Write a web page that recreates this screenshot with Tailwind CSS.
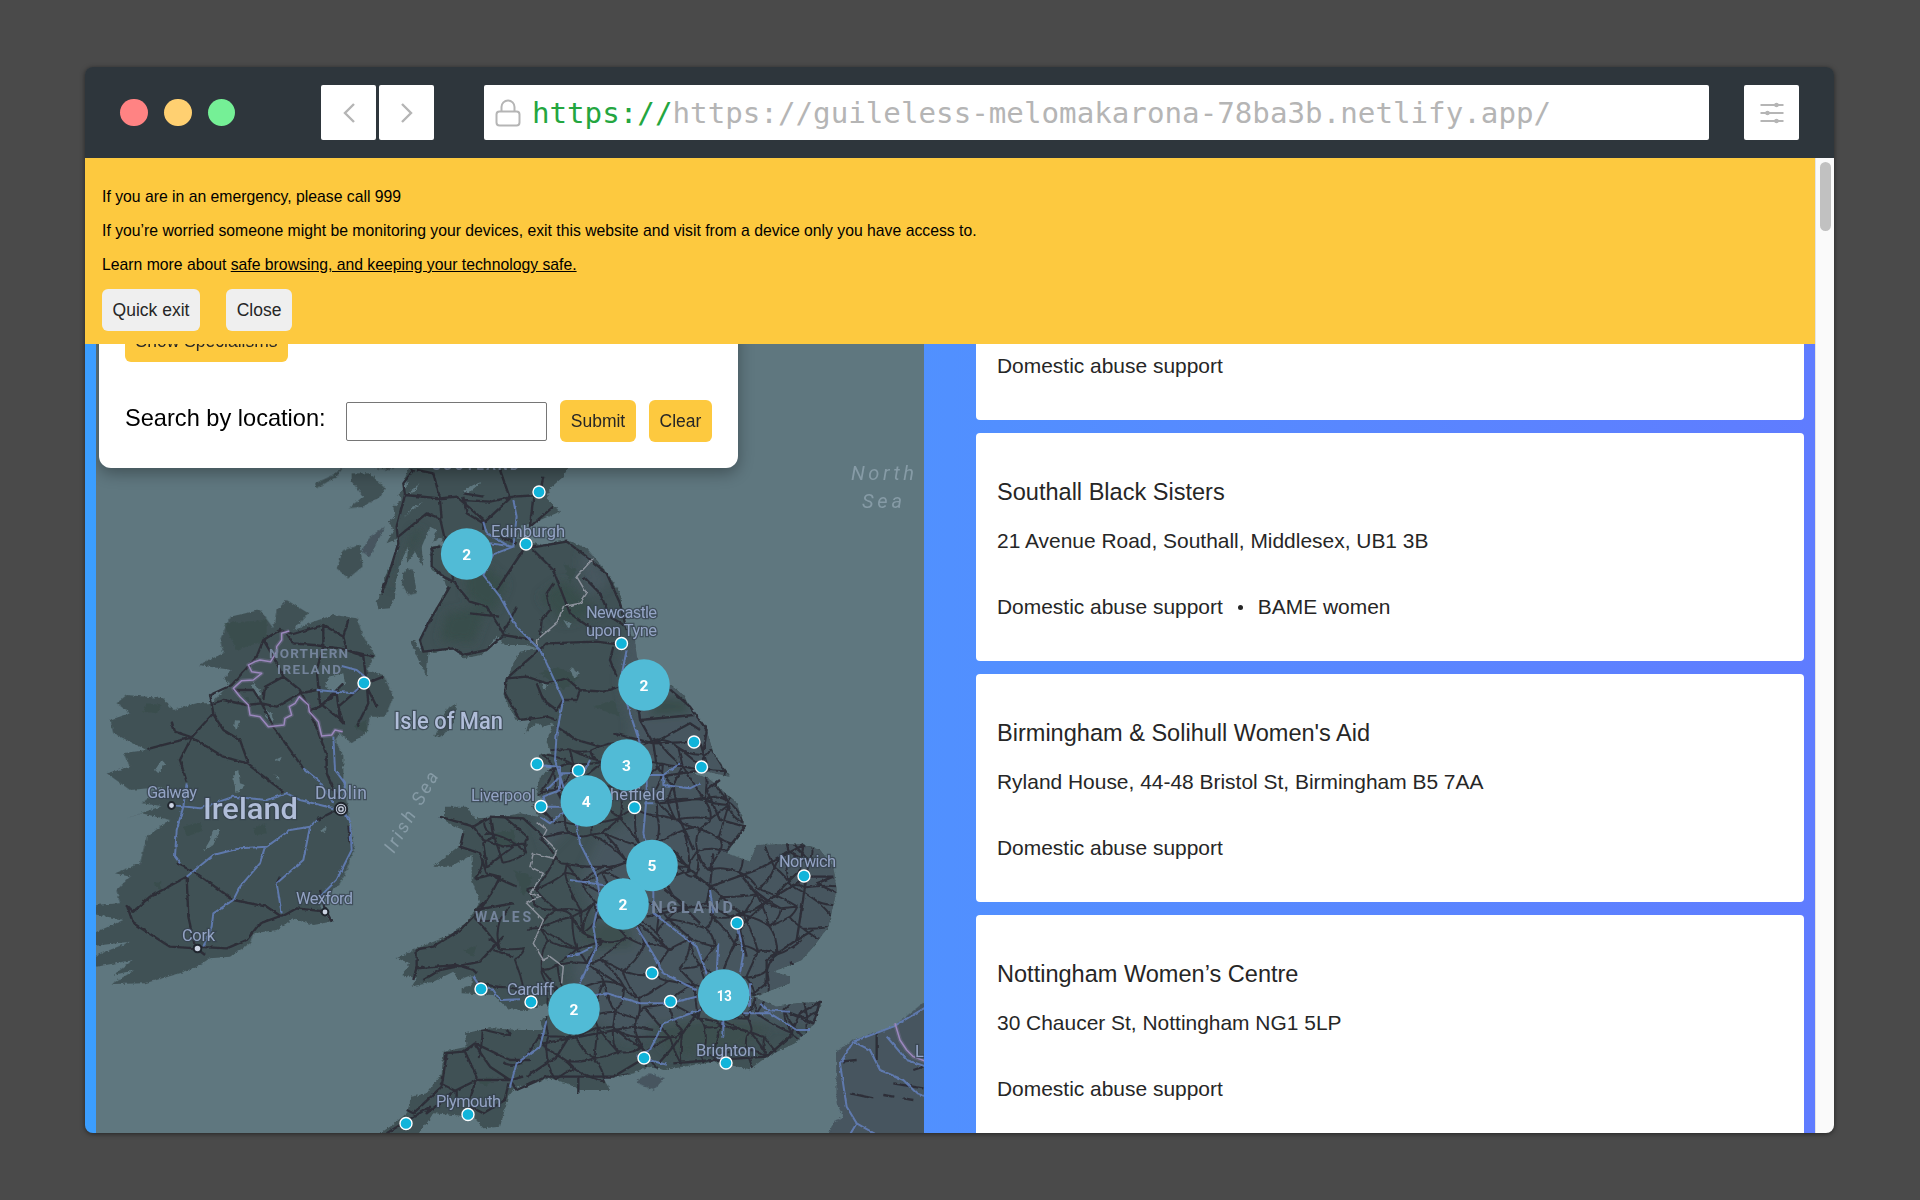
<!DOCTYPE html>
<html lang="en">
<head>
<meta charset="utf-8">
<title>Support services map</title>
<script src="https://cdn.jsdelivr.net/npm/@tailwindcss/browser@4"></script>
</head>
<body class="w-[1920px] h-[1200px] overflow-hidden bg-[#4a4a4a] pt-[67px] pl-[85px] font-['Liberation_Sans',Arial,sans-serif] text-[#262626]">
<div class="flex h-[1066px] w-[1749px] flex-col overflow-hidden rounded-lg shadow-[0_1px_5px_rgba(0,0,0,0.5)]">

  <!-- Browser toolbar -->
  <header class="flex h-[91px] shrink-0 items-center bg-[#2e363c] pl-[35px]">
    <div class="flex gap-4">
      <span class="size-[27.8px] rounded-full bg-[#ff8383]"></span>
      <span class="size-[27.8px] rounded-full bg-[#ffd071]"></span>
      <span class="size-[27.8px] rounded-full bg-[#75f096]"></span>
    </div>
    <div class="ml-[86px] flex gap-[3px]">
      <button class="flex h-[55px] w-[55px] items-center justify-center rounded-xs bg-white">
        <svg class="h-5 w-3" viewBox="0 0 12 20" fill="none" stroke="#b5b5b5" stroke-width="2.4"><path d="M11 1 2 10l9 9"/></svg>
      </button>
      <button class="flex h-[55px] w-[55px] items-center justify-center rounded-xs bg-white">
        <svg class="h-5 w-3" viewBox="0 0 12 20" fill="none" stroke="#b5b5b5" stroke-width="2.4"><path d="M1 1l9 9-9 9"/></svg>
      </button>
    </div>
    <div class="ml-[50px] flex h-[55px] w-[1225px] items-center rounded-xs bg-white pl-[11px] font-['DejaVu_Sans_Mono',monospace] text-[29.2px] whitespace-nowrap text-[#b5b5b5]">
      <svg class="mr-[10.5px] h-[28px] w-[26px] shrink-0" viewBox="0 0 26 28" fill="none" stroke="#b5b5b5" stroke-width="2"><rect x="1.500" y="12.500" width="23" height="14" rx="3"/><path d="M6.500 12.500V8a6.500 6.500 0 0 1 13 0v4.500"/></svg>
      <span class="pt-0.5 text-[#24a63f]">https://</span><span class="pt-0.5">https://guileless-melomakarona-78ba3b.netlify.app/</span>
    </div>
    <button class="ml-[35px] flex h-[55px] w-[55px] items-center justify-center rounded-xs bg-white">
      <svg class="h-[22px] w-6" viewBox="0 0 24 22" stroke="#b5b5b5" stroke-width="2" fill="#b5b5b5"><path d="M.5 3h23M.5 11h23M.5 19h23"/><g stroke="none"><circle cx="16.500" cy="3" r="2.300"/><circle cx="7.500" cy="11" r="2.300"/><circle cx="16.500" cy="19" r="2.300"/></g></svg>
    </button>
  </header>

  <div class="flex h-[975px]">
    <div class="flex w-[1730px] flex-col bg-linear-to-r from-[#3b9eff] via-[#5190ff] to-[#5f7cff]">

      <!-- Safety banner -->
      <section class="h-[186px] shrink-0 bg-[#fdc93f] pt-[30px] pl-[17px] text-[15.76px] leading-[18px] text-black">
        <p>If you are in an emergency, please call 999</p>
        <p class="mt-4">If you’re worried someone might be monitoring your devices, exit this website and visit from a device only you have access to.</p>
        <p class="mt-4">Learn more about <a class="underline">safe browsing, and keeping your technology safe.</a></p>
        <div class="mt-[15px] flex gap-[26px] text-[17.5px] text-[#262626]">
          <button class="h-[42px] w-[98px] rounded-md bg-[#efefef]">Quick exit</button>
          <button class="h-[42px] w-[66px] rounded-md bg-[#efefef]">Close</button>
        </div>
      </section>

      <div class="flex h-[789px] overflow-hidden pr-[11px] pl-[11px]">
        <!-- Map -->
        <div class="relative h-[789px] w-[828px] shrink-0 overflow-hidden bg-[#5f777f]">
          <svg class="absolute inset-0 block" width="828" height="789" viewBox="96 344 828 789" font-family="Roboto,'Open Sans',sans-serif">
            <defs>
              <filter id="coast" x="-5%" y="-5%" width="110%" height="110%"><feTurbulence type="fractalNoise" baseFrequency="0.11" numOctaves="4" seed="4"/><feDisplacementMap in="SourceGraphic" scale="11" xChannelSelector="R" yChannelSelector="G"/></filter>
              <filter id="wiggle" x="-5%" y="-5%" width="110%" height="110%"><feTurbulence type="fractalNoise" baseFrequency="0.06" numOctaves="2" seed="9"/><feDisplacementMap in="SourceGraphic" scale="9" xChannelSelector="R" yChannelSelector="G"/></filter>
              <filter id="soft"><feGaussianBlur stdDeviation="14"/></filter>
              <path id="gb" d="M1000 380 975 445 985 465 955 495 965 510 940 530 945 560 925 575 940 600 920 640 955 625 955 660 935 700 915 740 903 790 890 815 895 838 930 835 945 800 948 750 965 690 985 650 980 700 1005 665 1030 710 1025 650 1050 590 1070 600 1060 635 1085 620 1090 645 1050 650 1055 720 1090 740 1100 775 1080 820 1050 870 1020 920 1025 965 1000 930 993 940 1020 1000 1040 1040 1045 970 1125 955 1150 985 1205 975 1250 920 1275 945 1340 945 1370 955 1320 965 1300 1000 1285 1040 1270 1095 1310 1170 1350 1170 1335 1210 1370 1180 1390 1190 1420 1180 1400 1235 1415 1270 1375 1275 1385 1300 1420 1310 1380 1340 1370 1390 1395 1410 1355 1430 1380 1462 1320 1450 1260 1462 1185 1465 1160 1430 1095 1430 1095 1475 1150 1500 1140 1545 1060 1610 1110 1610 1175 1575 1175 1650 1200 1715 1160 1780 1100 1820 1010 1855 950 1885 990 1900 965 1935 1010 1945 995 1970 1060 1955 1120 1925 1135 1950 1175 1935 1175 1965 1145 1975 1145 1990 1240 1995 1285 2038 1340 2040 1400 2020 1412 2055 1380 2070 1390 2100 1320 2100 1230 2095 1155 2110 1160 2150 1090 2165 1085 2230 1040 2290 995 2300 980 2350 930 2390 870 2430 1000 2430 1040 2380 1060 2350 1180 2360 1210 2395 1260 2390 1285 2300 1305 2275 1410 2245 1460 2260 1500 2280 1590 2280 1570 2245 1660 2230 1700 2210 1755 2220 1810 2210 1900 2195 2010 2218 2060 2180 2145 2140 2200 2085 2225 2015 2150 2020 2090 2030 2020 2000 2130 1960 2130 1940 2080 1925 2165 1890 2200 1850 2245 1790 2270 1680 2260 1610 2220 1560 2160 1542 2030 1545 2010 1595 1940 1570 1995 1490 1970 1420 1885 1345 1820 1325 1870 1322 1950 1340 1900 1270 1880 1200 1840 1150 1810 1095 1770 1065 1700 1030 1670 980 1665 930 1635 890 1620 790 1590 740 1550 690 1520 655 1460 630 1380 645 1310 625 1320 590 1360 578 1440 545 1400 505 1410 475 1450 440 1490 360Z"/>
              <path id="eire" d="M620 0 685 40 640 90 700 65 760 45 830 55 850 110 885 165 860 210 910 225 940 290 915 350 870 350 860 395 815 430 780 400 765 420 790 470 790 550 800 600 810 680 822 745 800 810 780 850 735 890 720 920 755 965 700 975 640 955 590 990 520 1000 510 1030 450 1070 390 1075 350 1100 300 1120 195 1150 95 1152 165 1110 100 1125 160 1080 40 1102 40 1070 150 1025 45 1037 40 1000 130 960 40 942 45 915 120 910 110 870 150 830 105 820 180 790 200 710 270 660 185 640 140 655 245 618 185 610 250 560 150 570 80 520 150 500 130 460 200 450 100 400 90 360 150 340 110 310 140 285 250 295 280 330 350 310 395 310 450 250 430 235 455 210 355 195 430 160 420 120 450 50 540 30 580 85 590 30Z"/>
              <clipPath id="gbClip"><use href="#gb"/></clipPath>
            </defs>

            <g transform="translate(80 330) scale(.33333)">
              <g filter="url(#coast)" fill="#405155">
                <use href="#gb"/>
                <use href="#eire" y="810"/>
                <path d="M1130 1120 1120 1180 1085 1220 1062 1218 1090 1180 1095 1140Z"/>
                <path d="M980 715 1000 720 1010 790 985 795 965 760 970 730Z"/>
                <path d="M790 660 840 645 848 710 805 745 770 715Z"/><path d="M915 590 870 680 845 665 870 620Z" fill="#46555f"/>
                <path d="M815 430 870 430 915 475 900 500 850 530 805 535 850 500 815 455Z"/>
                <path d="M705 460 760 435 790 412 770 440 710 475Z"/><path d="M870 400 950 400 930 420 890 415Z"/>
                <path d="M1670 2250 1710 2230 1755 2245 1720 2280 1675 2260Z" fill="#46555f"/>
                <path d="M2540 2010 2440 2090 2320 2130 2268 2165 2270 2320 2290 2360 2260 2375 2240 2430 2540 2430Z" fill="#46555f"/>
              </g>
              <!-- Lowland tint and woodland -->
              <g clip-path="url(#gbClip)"><g filter="url(#soft)">
                <path d="M1640 900 1620 1050 1650 1180 1640 1300 1700 1420 1640 1480 1560 1520 1500 1640 1560 1800 1480 1900 1500 2050 1640 2130 1900 2060 2240 2100 2320 1500 1900 1100Z" fill="#47565f"/>
                <path d="M1400 1340 1500 1370 1480 1480 1400 1560 1360 1450ZM1500 680 1530 660 1590 760 1520 800Z" fill="#47565f"/>
                <path d="M1740 1100 1820 1110 1830 1150 1700 1160ZM1450 750 1560 850 1450 880 1380 800ZM1100 850 1220 830 1180 940 1080 930ZM1030 600 1000 600 960 740 930 780ZM1150 650 1280 760 1240 850 1160 800Z" fill="#394d4b"/>
                <path d="M1700 2090 1900 2060 2080 2080 1980 2160 1780 2180ZM1500 1800 1640 1760 1660 1850 1540 1860Z" fill="#3e504f"/>
              </g></g>
              <g fill="#394e4c" opacity=".75" filter="url(#coast)">
                <path d="M430 880 560 870 560 930 470 960ZM200 1120 245 1125 230 1150 190 1145ZM310 1490 360 1475 370 1500 320 1520ZM520 1495 555 1480 560 1510 525 1515ZM220 1660 245 1655 240 1680ZM1150 1860 1190 1845 1180 1880ZM470 1100 510 1105 500 1130ZM820 1190 860 1170 860 1210ZM1240 1510 1300 1500 1310 1540 1250 1550ZM1300 1620 1360 1640 1330 1700ZM1190 2250 1240 2240 1220 2270ZM1380 1030 1430 1010 1500 1040 1450 1080ZM1540 1130 1600 1110 1620 1160ZM1450 700 1490 720 1470 760Z"/>
              </g>
              <!-- Lakes -->
              <g fill="#5f777f" filter="url(#coast)">
                <path d="M745 1040 790 1030 795 1060 770 1085 735 1070ZM465 1325 475 1320 480 1360 495 1365 470 1390 460 1350ZM555 1140 575 1150 580 1180 560 1165ZM520 1055 545 1090 535 1100 515 1070ZM465 1170 478 1172 470 1200 462 1195ZM580 1330 600 1345 590 1345ZM585 1290 605 1280 600 1295ZM400 1500 420 1500 400 1545 370 1565 390 1530ZM720 1500 740 1490 735 1510ZM225 1320 245 1290 255 1300 235 1330ZM1020 455 1005 485 985 490 1010 470ZM1205 455 1165 490 1145 485 1180 465ZM1030 515 990 545 970 565 1000 530ZM1385 1060 1405 1062 1390 1080ZM1450 870 1475 880 1465 895ZM1470 1010 1500 1030 1480 1045Z"/>
              </g>

              <!-- Local roads -->
              <g fill="none" stroke="#2d2f38" stroke-width="7" stroke-linejoin="round" filter="url(#wiggle)">
                <g clip-path="url(#gbClip)"><path id="mesh" stroke-width="6"/></g>
                <path d="M275 1175 285 1205 335 1222 400 1150 390 1095 455 1065 530 980 550 930 600 900 640 912 730 885 790 920 805 870M335 1222 250 1245 205 1257M335 1222 430 1280 500 1300 610 1385M335 1222 300 1290 320 1355M398 1150 430 1200 480 1230 505 1300M400 1120 430 1110 500 1125 545 1120 520 1080 460 1080M545 1120 590 1130 660 1090 710 1080M545 1120 580 1190 670 1315M550 1110 555 1070 610 1040 580 980 550 930M610 1040 660 1080 690 1140 720 1130 790 1060M620 910 640 940 700 945 780 955 880 980M730 885 730 950 710 1020 720 1120 770 1160 790 1180 775 1130 855 1060 890 1130M790 920 800 960 850 980 860 1060 865 1120 830 1190M720 1130 770 1090 780 1170M690 1140 740 1275 740 1330 770 1400M860 1060 910 1040M710 1470 770 1440M805 1490 812 1540M290 1600 350 1630 460 1710 560 1730 605 1760 650 1735 740 1745 755 1775M320 1640 325 1760 345 1850 440 1855 500 1830 540 1780 610 1755M320 1640 210 1700 160 1745 140 1725 160 1780 270 1850 350 1855 375 1875M600 1640 590 1660M720 1680 735 1740"/>
                <path d="M1000 420 970 460 975 495 1080 505 1060 430 1010 420M975 495 950 590 955 640 930 720 905 790M955 620 1040 550 1080 565 1095 630 1110 700 1120 750M1080 510 1085 565M1080 505 1130 500 1210 570 1210 600M1150 500 1160 550 1210 580 1290 505 1260 420M1150 510 1230 515 1300 500 1380 495 1390 440M1210 500 1150 490M1080 650 1055 655 1055 710 1090 740 1120 755 1170 815 1220 830 1270 910 1310 830M1110 770 1050 870 1020 930 1030 965 1120 955 1150 975 1220 960 1270 915 1360 930M1340 645 1250 780M1360 500 1350 590 1420 530M1310 640 1260 620M1340 655 1460 635 1520 680 1580 730 1620 820 1640 900M1360 660 1420 720 1435 760 1470 850 1540 900M1420 760 1400 790 1410 840 1385 870 1380 920M1510 740 1560 790 1590 860 1640 890M1170 850 1260 860"/>
                <path d="M1280 1045 1400 940 1550 935 1630 945M1280 1045 1340 1040 1400 1060 1460 1045 1500 1080 1570 1085 1650 1060M1280 1045 1275 1090 1320 1170 1400 1160 1430 1170M1370 1060 1390 1110 1430 1140 1450 1110 1490 1110 1500 1080M1600 950 1590 990 1610 1040M1660 1000 1680 1170 1720 1240 1830 1180 1860 1200M1640 1060 1760 1070 1830 1130 1880 1200 1870 1270M1680 1170 1840 1155M1720 1240 1860 1235 1880 1300M1430 1190 1490 1230 1560 1250M1720 1240 1600 1210M1720 1240 1730 1310 1780 1370 1800 1470 1840 1560M1920 1350 1880 1380 1920 1470 1995 1490 1940 1560M1740 1340 1870 1320M1740 1420 1910 1400"/>
                <path d="M1080 1460 1180 1490 1230 1460 1330 1465 1400 1530M1150 1510 1140 1550 1200 1570 1220 1630M1180 1490 1210 1530 1270 1550 1340 1540M1230 1460 1240 1520 1210 1540 1220 1610 1300 1550M1220 1630 1260 1640 1240 1680 1200 1740 1140 1800 1060 1850 1010 1858 1010 1910 1000 1950M1220 1630 1310 1670M1185 1740 1300 1720M1010 1915 1130 1905 1180 1920 1190 1930M1030 1950 1080 1920 1200 1895 1270 1820M1240 1860 1300 1880"/>
                <path d="M920 2410 1050 2330 1040 2350 1130 2280 1190 2250 1290 2250 1330 2240M1090 2170 1150 2165 1185 2140 1290 2190 1350 2190M1185 2145 1230 2210 1290 2250M1155 2165 1190 2240 1170 2310M1100 2170 1085 2270 1000 2350 980 2340M1080 2260 1130 2285 1130 2330M1285 2260 1275 2310 1210 2350 1170 2330M1290 2250 1310 2280 1400 2240 1500 2240 1600 2240 1700 2180M1495 2240 1495 2295M1390 2140 1500 2120 1660 2090 1720 2100M1480 2100 1430 2180 1340 2240M1780 2200 1900 2190 2060 2180 2130 2120 2160 2050 2220 2015 2200 2080 2130 2050M1740 2195 1780 2150 1850 2050M1720 1590 1780 1700 1860 1780"/>
                <path d="M1780 1560 1830 1620 1890 1670 1880 1720 1950 1760 2020 1740 2180 1640 2260 1640M1900 1570 1890 1670 2030 1620 2170 1545M2170 1545 2160 1620 2080 1700 1990 1780 1950 1870M1880 1720 1790 1740 1700 1760M2260 1640 2210 1660 2270 1690M2180 1640 2150 1830 2060 1890 2060 1960 2020 1990M2150 1830 2200 1800M1970 1760 2000 1880"/>
                <path d="M2280 2195 2330 2190M2310 2290 2380 2305M2410 2295 2440 2300M2390 2110 2390 2190M2440 2260 2530 2275M2500 2220 2530 2210M2470 2305 2500 2310"/>
              </g>
              <!-- Wales and Scotland borders -->
              <g fill="none" stroke="#8b919b" stroke-width="4.500" filter="url(#wiggle)"><path d="M1540 685 1490 740 1520 790 1500 820 1450 830 1430 880 1370 930 1370 950M1370 1475 1400 1500 1390 1520 1430 1560 1420 1585 1360 1570 1350 1610 1390 1630 1350 1690 1380 1700 1340 1720 1390 1770 1360 1840 1390 1890 1410 1880 1450 1910 1445 1960"/></g>
              <!-- Motorways -->
              <g fill="none" stroke="#637fb9" stroke-width="6" stroke-linejoin="round" opacity=".88" filter="url(#wiggle)">
                <path d="M1300 510 1310 560 1300 650 1240 673 1210 735 1260 800 1310 890 1380 960 1400 1000 1450 1110 1430 1210 1425 1290 1450 1370 1480 1440 1500 1540 1550 1640 1560 1700 1540 1790 1550 1850 1500 1960M1210 575 1220 610 1290 650M1230 640 1300 650M1450 1330 1400 1380M1370 1305 1440 1310 1440 1380 1390 1400 1400 1430 1500 1430M1380 1460 1410 1480 1460 1440M1440 1330 1510 1330 1530 1290M1640 960 1620 1060 1660 1180 1700 1300 1700 1400 1690 1510 1720 1620 1720 1750M1710 1335 1750 1335 1800 1300M1750 1335 1750 1365 1830 1375 1860 1360M1720 1420 1690 1420M1470 1650 1600 1670M1670 1790 1730 1890 1750 1930 1850 1980M1720 1750 1850 1850 1880 1930M1890 1680 1900 1750M1915 1840 1910 1930M1970 1770 1990 1870 1980 1930M1460 2010 1580 1990 1680 2020 1770 2020 1850 2000M1460 1880 1500 1870 1540 1850M1400 2070 1380 2150 1310 2200 1290 2270M1180 1940 1200 1970 1240 1980 1260 2010 1320 2008M1860 2040 1750 2080 1710 2160 1670 2180M1710 2190 1760 2205M1930 2070 1930 2120M1990 2050 2070 2050 2150 2100 2190 2100M2040 2020 2060 2040 2130 2045M2010 1960 2010 2030"/>
                <path d="M320 1360 310 1430 290 1500 285 1580 300 1600M275 1425 360 1435 460 1400 560 1410 620 1390 660 1410 760 1435M670 1315 720 1355 760 1420M760 1220 765 1320 795 1360 790 1410M710 1470 690 1490 630 1500 560 1550 480 1555 400 1575 320 1640M555 1550 540 1600 480 1670 460 1710 400 1750 395 1790 370 1850M690 1490 670 1590 590 1660 605 1750M785 1430 810 1480 815 1560 770 1650 720 1700M710 1080 820 1090 850 1060M785 1008 830 1020 860 1045"/>
                <path d="M2540 2030 2440 2090 2320 2135 2280 2200 2300 2330 2330 2380 2300 2430M2320 2135 2370 2160 2400 2220 2470 2250 2510 2290 2540 2300M2420 2120 2480 2190 2540 2210M2330 2380 2400 2420"/>
              </g>
              <!-- Irish and French borders -->
              <g fill="none" stroke-linejoin="round" stroke="#9b87bd">
                <path stroke-width="4.500" d="M628 903 605 910 605 930 590 950 590 965 572 995 540 990 525 995 505 1005 515 1025 545 1030 520 1050 485 1052 460 1075 480 1100 505 1125 510 1155 540 1160 565 1190 612 1185 615 1165 635 1155 628 1130 645 1120 658 1100 685 1125 688 1145 715 1175 725 1218 755 1215 765 1200 788 1205M2445 2080 2460 2130 2480 2160 2500 2180 2540 2195"/>
                <path stroke-width="13" opacity=".22" d="M628 903 605 910 605 930 590 950 590 965 572 995 540 990 525 995 505 1005 515 1025 545 1030 520 1050 485 1052 460 1075 480 1100 505 1125 510 1155 540 1160 565 1190 612 1185 615 1165 635 1155 628 1130 645 1120 658 1100 685 1125 688 1145 715 1175 725 1218 755 1215 765 1200 788 1205M2445 2080 2460 2130 2480 2160 2500 2180 2540 2195"/>
              </g>
            </g>

            <!-- Place names -->
            <g fill="#93a3c4" stroke="#36424f" stroke-width="2.500" stroke-opacity=".75" paint-order="stroke" font-size="16.500" lengthAdjust="spacingAndGlyphs">
              <text x="491" y="536.500" textLength="74">Edinburgh</text>
              <text x="586" y="618" textLength="71">Newcastle</text>
              <text x="586" y="636" textLength="71">upon Tyne</text>
              <text x="147" y="798" textLength="50">Galway</text>
              <text x="315" y="799" textLength="52" font-size="17.500">Dublin</text>
              <text x="471" y="801" textLength="64">Liverpool</text>
              <text x="600" y="799.500" textLength="65">Sheffield</text>
              <text x="779" y="867" textLength="57">Norwich</text>
              <text x="182" y="941" textLength="33">Cork</text>
              <text x="296" y="904" textLength="57">Wexford</text>
              <text x="507" y="995" textLength="47">Cardiff</text>
              <text x="696" y="1056" textLength="60">Brighton</text>
              <text x="436" y="1106.500" textLength="65">Plymouth</text>
              <text x="915" y="1057">L</text>
              <g fill="#b0bdd9" font-weight="500">
                <text x="394" y="729" textLength="109" lengthAdjust="spacingAndGlyphs" font-size="23.500">Isle of Man</text>
                <text x="203" y="818.500" textLength="95" lengthAdjust="spacingAndGlyphs" font-size="29.500">Ireland</text>
              </g>
              <g fill="#74849b" stroke="none" font-weight="700" font-size="13.500">
                <text x="269" y="658" textLength="79">NORTHERN</text>
                <text x="277" y="674" textLength="64">IRELAND</text>
                <text x="475" y="922" textLength="56" font-size="14">WALES</text>
                <text x="639" y="912.500" textLength="94" font-size="16">ENGLAND</text>
                <text x="432" y="469.500" textLength="87" font-size="14">SCOTLAND</text>
              </g>
              <g fill="#869ba6" stroke="none" font-style="italic" font-size="20">
                <text x="851" y="480" textLength="63">North</text>
                <text x="862" y="508" textLength="40">Sea</text>
                <text transform="translate(394 854) rotate(-60)" textLength="90" font-size="18.500">Irish Sea</text>
              </g>
            </g>
            <g fill="#cdd4e4" stroke="#20262e" stroke-width="2">
              <circle cx="171.500" cy="805.500" r="3.400"/><circle cx="325" cy="912" r="3.400"/><circle cx="197.500" cy="948.500" r="3.800"/>
              <circle cx="341" cy="809" r="6.200"/><circle cx="341" cy="809" r="3.600" stroke="#2e3540" stroke-width="1.500"/><circle cx="341" cy="809" r="1.500" stroke="none" fill="#2e3540"/>
            </g>

            <!-- Single locations -->
            <g id="dots" fill="#11b4da" stroke="#fff" stroke-width="1.400"></g>
            <!-- Clusters -->
            <g fill="#51bbd6">
              <circle cx="466.700" cy="554" r="25.800"/><circle cx="644" cy="685" r="25.800"/><circle cx="626.500" cy="765" r="25.800"/><circle cx="586.300" cy="801" r="25.800"/><circle cx="652" cy="865.500" r="25.800"/><circle cx="623" cy="904" r="25.800"/><circle cx="574" cy="1009" r="25.800"/><circle cx="723.700" cy="995" r="25.800"/>
            </g>
            <g fill="#fff" font-size="15.500" font-weight="700" text-anchor="middle">
              <text x="466.700" y="559.500">2</text><text x="644" y="690.500">2</text><text x="626.500" y="770.500">3</text><text x="586.300" y="806.500">4</text><text x="652" y="871">5</text><text x="623" y="909.500">2</text><text x="574" y="1014.500">2</text><text x="724.300" y="1000.500" textLength="15" lengthAdjust="spacingAndGlyphs">13</text>
            </g>
          </svg>

          <!-- Filter panel -->
          <div class="absolute -top-6 left-[3px] h-[148px] w-[639px] rounded-xl bg-white px-[26px] shadow-[0_5px_16px_rgba(0,0,0,0.32)]">
            <button class="block h-[42px] w-[163px] rounded-md bg-[#fdc93f] text-[17.5px] text-[#262626]">Show Specialisms</button>
            <div class="mt-[38px] flex items-center text-[17.5px]">
              <label class="w-[221px] pb-1 text-[23.6px] text-black">Search by location:</label>
              <input class="h-[39px] w-[201px] rounded-xs border border-[#767676] bg-white">
              <button class="ml-[13px] h-[42px] w-[76px] rounded-md bg-[#fdc93f]">Submit</button>
              <button class="ml-[13px] h-[42px] w-[63px] rounded-md bg-[#fdc93f]">Clear</button>
            </div>
          </div>
        </div>

        <!-- Results -->
        <div class="ml-[52px] flex flex-1 flex-col gap-[13px] text-[20.95px] leading-6">
          <article class="h-[76px] shrink-0 rounded-b bg-white pt-[10px] pl-[21px]"><p>Domestic abuse support</p></article>
          <article class="h-[228px] shrink-0 rounded bg-white pt-[45px] pl-[21px]">
            <h2 class="text-[23.56px] leading-7">Southall Black Sisters</h2>
            <p class="mt-[23px]">21 Avenue Road, Southall, Middlesex, UB1 3B</p>
            <p class="mt-[42px] flex items-center"><span>Domestic abuse support</span><span class="mr-[15px] ml-[15px] size-[5px] rounded-full bg-[#262626]"></span><span>BAME women</span></p>
          </article>
          <article class="h-[228px] shrink-0 rounded bg-white pt-[45px] pl-[21px]">
            <h2 class="text-[23.56px] leading-7">Birmingham &amp; Solihull Women's Aid</h2>
            <p class="mt-[23px]">Ryland House, 44-48 Bristol St, Birmingham B5 7AA</p>
            <p class="mt-[42px]">Domestic abuse support</p>
          </article>
          <article class="h-[228px] shrink-0 rounded bg-white pt-[45px] pl-[21px]">
            <h2 class="text-[23.56px] leading-7">Nottingham Women’s Centre</h2>
            <p class="mt-[23px]">30 Chaucer St, Nottingham NG1 5LP</p>
            <p class="mt-[42px]">Domestic abuse support</p>
          </article>
        </div>
      </div>
    </div>

    <!-- Scrollbar -->
    <div class="flex w-[19px] justify-center border-l border-[#e4e4e4] bg-[#fafafa] pt-1">
      <div class="h-[69px] w-[11px] rounded-full bg-[#c1c1c1]"></div>
    </div>
  </div>
</div>

<script>
  // Single locations on the map
  const spots = [[539,492],[526,544],[621.5,643.5],[364,683],[694,742],[701.5,767],[537,764],[578.5,770.5],[541,806.5],[634.5,807.5],[804,876],[737,923],[652,973],[670.5,1001.5],[481,989],[531,1002],[644,1058],[726,1063],[468,1114.5],[406,1123.5]];
  document.getElementById('dots').innerHTML = spots.map(([x, y]) => `<circle cx="${x}" cy="${y}" r="6"/>`).join('');

  // Minor road network: a jittered lattice of curved links over England and Wales
  let seed = 7;
  const rnd = () => (seed = (seed * 16807) % 2147483647) / 2147483647;
  const step = 66, cols = 19, rows = 16, pts = [];
  for (let r = 0; r < rows; r++) for (let c = 0; c < cols; c++)
    pts.push([1190 + c * step + (r % 2) * 30 + (rnd() - .5) * 60, 1255 + r * step + (rnd() - .5) * 60]);
  let d = '';
  const link = (a, b) => {
    const mx = (a[0] + b[0]) / 2 + (rnd() - .5) * 34, my = (a[1] + b[1]) / 2 + (rnd() - .5) * 34;
    d += `M${a[0].toFixed(0)} ${a[1].toFixed(0)}Q${mx.toFixed(0)} ${my.toFixed(0)} ${b[0].toFixed(0)} ${b[1].toFixed(0)}`;
  };
  for (let r = 0; r < rows; r++) for (let c = 0; c < cols; c++) {
    const i = r * cols + c, k = c < 3 ? .35 : c < 13 ? .88 : .6;
    if (c < cols - 1 && rnd() < k) link(pts[i], pts[i + 1]);
    if (r < rows - 1 && rnd() < k) link(pts[i], pts[i + cols]);
    if (c < cols - 1 && r < rows - 1 && rnd() < k * .45) link(pts[i], pts[i + cols + 1]);
  }
  document.getElementById('mesh').setAttribute('d', d);
</script>
</body>
</html>
